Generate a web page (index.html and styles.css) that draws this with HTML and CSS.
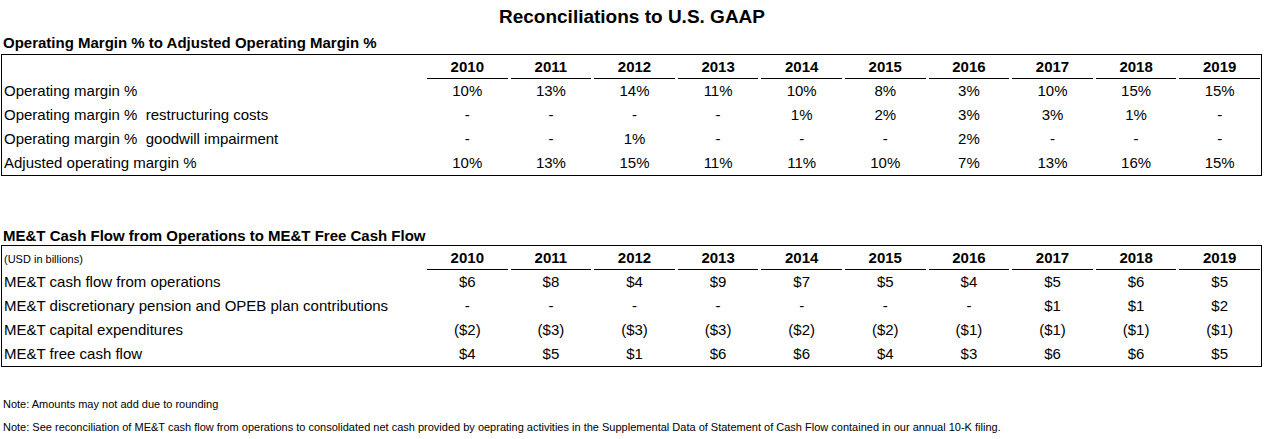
FILE: index.html
```html
<!DOCTYPE html>
<html>
<head>
<meta charset="utf-8">
<link rel="stylesheet" href="styles.css">
</head>
<body>
<div class="page">
  <h1 class="title">Reconciliations to U.S. GAAP</h1>

  <h2 class="section-title first">Operating Margin % to Adjusted Operating Margin %</h2>
  <div class="box">
    <div class="grid">
      <div class="label head"></div>
      <div class="year">2010</div><div class="year">2011</div><div class="year">2012</div><div class="year">2013</div><div class="year">2014</div><div class="year">2015</div><div class="year">2016</div><div class="year">2017</div><div class="year">2018</div><div class="year">2019</div>

      <div class="label">Operating margin %</div>
      <div class="num">10%</div><div class="num">13%</div><div class="num">14%</div><div class="num">11%</div><div class="num">10%</div><div class="num">8%</div><div class="num">3%</div><div class="num">10%</div><div class="num">15%</div><div class="num">15%</div>

      <div class="label">Operating margin %&nbsp; restructuring costs</div>
      <div class="num">-</div><div class="num">-</div><div class="num">-</div><div class="num">-</div><div class="num">1%</div><div class="num">2%</div><div class="num">3%</div><div class="num">3%</div><div class="num">1%</div><div class="num">-</div>

      <div class="label">Operating margin %&nbsp; goodwill impairment</div>
      <div class="num">-</div><div class="num">-</div><div class="num">1%</div><div class="num">-</div><div class="num">-</div><div class="num">-</div><div class="num">2%</div><div class="num">-</div><div class="num">-</div><div class="num">-</div>

      <div class="label">Adjusted operating margin %</div>
      <div class="num">10%</div><div class="num">13%</div><div class="num">15%</div><div class="num">11%</div><div class="num">11%</div><div class="num">10%</div><div class="num">7%</div><div class="num">13%</div><div class="num">16%</div><div class="num">15%</div>
    </div>
  </div>

  <h2 class="section-title second">ME&amp;T Cash Flow from Operations to ME&amp;T Free Cash Flow</h2>
  <div class="box">
    <div class="grid">
      <div class="label head small">(USD in billions)</div>
      <div class="year">2010</div><div class="year">2011</div><div class="year">2012</div><div class="year">2013</div><div class="year">2014</div><div class="year">2015</div><div class="year">2016</div><div class="year">2017</div><div class="year">2018</div><div class="year">2019</div>

      <div class="label">ME&amp;T cash flow from operations</div>
      <div class="num">$6</div><div class="num">$8</div><div class="num">$4</div><div class="num">$9</div><div class="num">$7</div><div class="num">$5</div><div class="num">$4</div><div class="num">$5</div><div class="num">$6</div><div class="num">$5</div>

      <div class="label">ME&amp;T discretionary pension and OPEB plan contributions</div>
      <div class="num">-</div><div class="num">-</div><div class="num">-</div><div class="num">-</div><div class="num">-</div><div class="num">-</div><div class="num">-</div><div class="num">$1</div><div class="num">$1</div><div class="num">$2</div>

      <div class="label">ME&amp;T capital expenditures</div>
      <div class="num">($2)</div><div class="num">($3)</div><div class="num">($3)</div><div class="num">($3)</div><div class="num">($2)</div><div class="num">($2)</div><div class="num">($1)</div><div class="num">($1)</div><div class="num">($1)</div><div class="num">($1)</div>

      <div class="label">ME&amp;T free cash flow</div>
      <div class="num">$4</div><div class="num">$5</div><div class="num">$1</div><div class="num">$6</div><div class="num">$6</div><div class="num">$4</div><div class="num">$3</div><div class="num">$6</div><div class="num">$6</div><div class="num">$5</div>
    </div>
  </div>

  <div class="notes">
    <p class="note">Note: Amounts may not add due to rounding</p>
    <p class="note">Note: See reconciliation of ME&amp;T cash flow from operations to consolidated net cash provided by oeprating activities in the Supplemental Data of Statement of Cash Flow contained in our annual 10-K filing.</p>
  </div>
</div>
</body>
</html>
```

FILE: styles.css
```css
html, body {
  margin: 0;
  padding: 0;
  background: #ffffff;
}

.page {
  font-family: "Liberation Sans", Arial, sans-serif;
  color: #000000;
  padding-left: 1px;
  width: 1261px;
}

.title {
  margin: 0;
  padding-top: 5px;
  height: 31px;
  line-height: 24px;
  font-size: 19px;
  font-weight: bold;
  text-align: center;
  box-sizing: border-box;
  padding-left: 1px;
}

.section-title {
  margin: 0;
  font-size: 15px;
  font-weight: bold;
  line-height: 18px;
  padding-left: 2px;
}

.section-title.first {
  height: 23px;
  padding-top: 3px;
  box-sizing: border-box;
}

.section-title.second {
  margin-top: 51px;
  height: 18px;
}

.box {
  border: 1px solid #000000;
}

.grid {
  display: grid;
  grid-template-columns: 422px repeat(10, 1fr);
  column-gap: 3px;
  grid-auto-rows: 24px;
  padding-right: 1px;
  font-size: 15px;
  line-height: 24px;
}

.label {
  padding-left: 2px;
  white-space: nowrap;
}

.label.head {
  height: 23px;
}

.label.small {
  font-size: 11px;
  line-height: 26px;
}

.year {
  height: 23px;
  line-height: 23px;
  text-align: center;
  font-weight: bold;
  border-bottom: 1px solid #000000;
}

.num {
  text-align: center;
}

.notes {
  margin-top: 26px;
  padding-left: 2px;
}

.note {
  margin: 0;
  font-size: 11px;
  line-height: 23px;
  white-space: nowrap;
}
```
